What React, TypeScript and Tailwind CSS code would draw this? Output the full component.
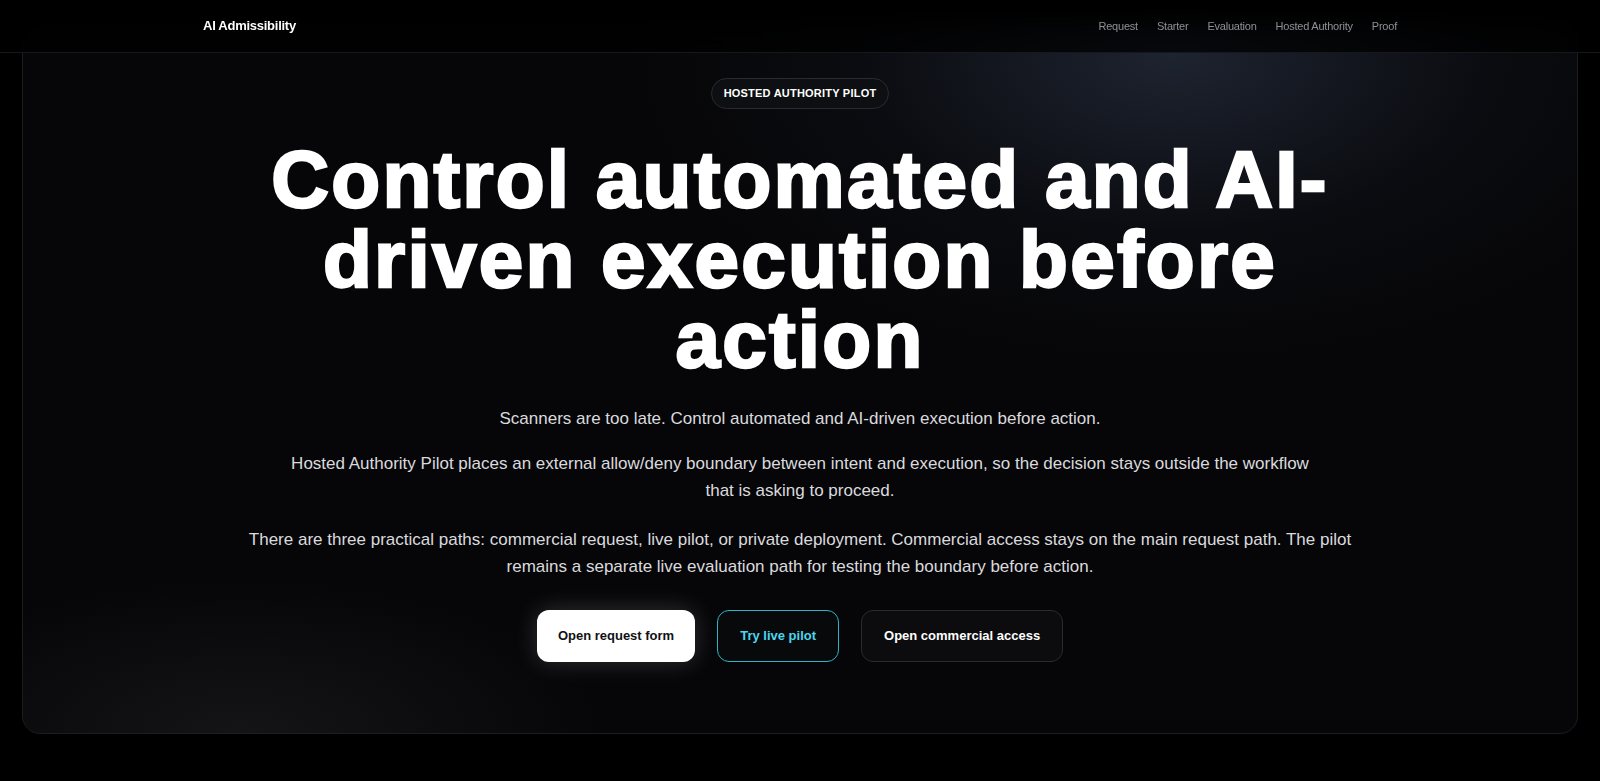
import React from "react";

const navLinks = ["Request", "Starter", "Evaluation", "Hosted Authority", "Proof"];

function Nav() {
  return (
    <header className="fixed inset-x-0 top-0 z-20 h-[53px] border-b border-[#17181c] bg-black/75 backdrop-blur-md">
      <div className="mx-auto flex h-full w-[1194px] items-center justify-between">
        <a className="text-[13px] font-bold tracking-[-0.02em] text-white" href="#">
          AI Admissibility
        </a>
        <nav className="flex items-center gap-[19px] text-[11px] tracking-[-0.02em] text-[#8e9096]">
          {navLinks.map((link) => (
            <a key={link} href="#">
              {link}
            </a>
          ))}
        </nav>
      </div>
    </header>
  );
}

export default function App() {
  return (
    <div className="min-h-[781px] bg-black font-['Liberation_Sans',Arial,sans-serif] text-white">
      <Nav />
      <main className="px-[22px] pt-[24px] pb-[48px]">
        <section className="relative overflow-hidden rounded-[18px] border border-[#1c1d21] bg-[#060608] px-10 pt-[53px] pb-[71px]">
          <div className="pointer-events-none absolute inset-0 bg-[radial-gradient(ellipse_700px_400px_at_74%_4%,rgba(40,48,66,0.7),rgba(20,23,32,0.35)_45%,transparent_78%)]" />
          <div className="pointer-events-none absolute inset-0 bg-[radial-gradient(ellipse_520px_220px_at_14%_100%,rgba(38,38,42,0.45),transparent_70%)]" />
          <div className="relative flex flex-col items-center text-center">
            <span className="flex h-[31px] items-center rounded-full border border-[#2a2b30] bg-[#0e0f12] px-3 text-[11px] font-bold tracking-[0.02em] text-white">
              HOSTED AUTHORITY PILOT
            </span>
            <h1 className="mt-[31px] max-w-[1120px] text-[80px] leading-[80px] font-bold tracking-[0.028em] [-webkit-text-stroke:2.5px_white]">
              Control automated and AI-driven execution before action
            </h1>
            <p className="mt-[25px] text-[17px] leading-[27px] text-[#dadade]">
              Scanners are too late. Control automated and AI-driven execution before action.
            </p>
            <p className="mt-[18px] max-w-[1040px] text-[17px] leading-[27px] text-[#dadade]">
              Hosted Authority Pilot places an external allow/deny boundary between intent and execution, so the
              decision stays outside the workflow that is asking to proceed.
            </p>
            <p className="mt-[22px] max-w-[1120px] text-[17px] leading-[27px] text-[#dadade]">
              There are three practical paths: commercial request, live pilot, or private deployment. Commercial access
              stays on the main request path. The pilot remains a separate live evaluation path for testing the boundary
              before action.
            </p>
            <div className="mt-[30px] flex items-center gap-[22px]">
              <a
                className="flex h-[52px] items-center rounded-[12px] bg-white px-[21px] text-[13px] font-bold text-[#111114] shadow-[0_0_24px_rgba(255,255,255,0.18)]"
                href="#"
              >
                Open request form
              </a>
              <a
                className="flex h-[52px] items-center rounded-[12px] border border-[#2fb3c8] bg-[#07090b] px-[22px] text-[13px] font-bold text-[#4dd6ee]"
                href="#"
              >
                Try live pilot
              </a>
              <a
                className="flex h-[52px] items-center rounded-[12px] border border-[#2a2b2f] bg-[#0c0c0e] px-[22px] text-[13px] font-bold text-white"
                href="#"
              >
                Open commercial access
              </a>
            </div>
          </div>
        </section>
      </main>
    </div>
  );
}
